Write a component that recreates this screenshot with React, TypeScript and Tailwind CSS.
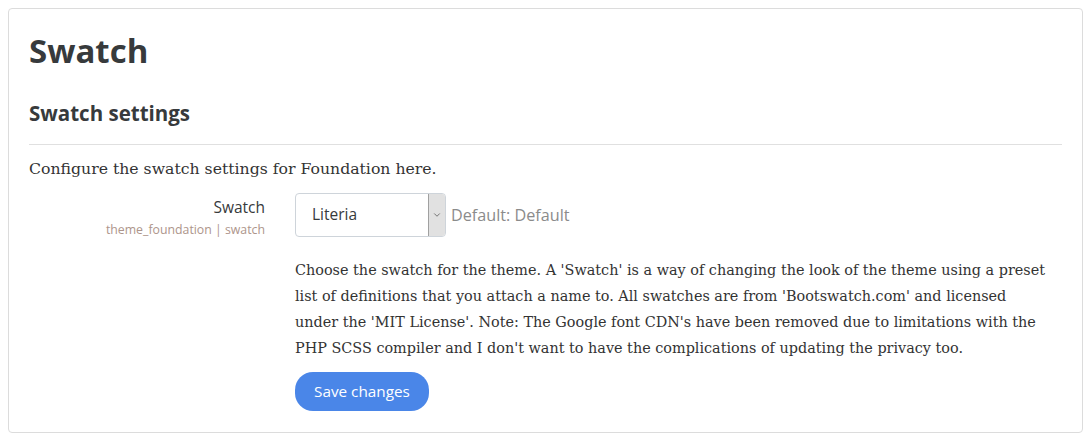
import { ChevronDown } from 'lucide-react'

const sans = "font-['Open_Sans','Noto_Sans',sans-serif]"
const serif = "font-['DejaVu_Serif',serif]"

export default function App() {
  return (
    <div className="min-h-screen bg-white p-2">
      <div className="border border-[#dcdcdc] rounded px-5 pt-[22px] pb-[21px] text-[#333]">
        <h2 className={`${sans} text-[33px] font-bold leading-[40px] text-[#373a3c]`}>Swatch</h2>
        <h3 className={`${sans} text-[20.5px] font-bold mt-[30px] leading-6 text-[#373a3c]`}>Swatch settings</h3>
        <hr className="mt-[19px] border-t border-[#e0e0e0]" />
        <p className={`${serif} text-[15.7px] mt-[12px] leading-6 text-[#333]`}>Configure the swatch settings for Foundation here.</p>

        <div className="flex mt-[12px]">
          <div className="w-[236px] shrink-0 text-right pt-[4px]">
            <div className={`${sans} text-[15.5px] leading-5 text-[#373a3c]`}>Swatch</div>
            <div className={`${sans} text-[12.3px] leading-5 mt-[3px] text-[#ad958b]`}>theme_foundation | swatch</div>
          </div>
          <div className="ml-[30px] flex-1">
            <div className="flex items-center">
              <div className="w-[151px] h-[44px] border border-[#ced4da] rounded flex">
                <div className={`${sans} flex-1 flex items-center pl-[16px] text-[15.5px] text-[#373a3c]`}>Literia</div>
                <div className="w-[17px] bg-[#e1e1e1] border-l border-[#a0a0a0] flex items-center justify-center rounded-r-[3px]">
                  <ChevronDown size={10} strokeWidth={1.5} className="text-[#333]" />
                </div>
              </div>
              <span className={`${sans} ml-[5px] text-[16.2px] text-[#8b8b8b]`}>Default: Default</span>
            </div>
            <p className={`${serif} text-[14.4px] leading-[26px] mt-[20px] text-[#333]`}>
              Choose the swatch for the theme. A 'Swatch' is a way of changing the look of the theme using a preset<br />
              list of definitions that you attach a name to. All swatches are from 'Bootswatch.com' and licensed<br />
              under the 'MIT License'. Note: The Google font CDN's have been removed due to limitations with the<br />
              PHP SCSS compiler and I don't want to have the complications of updating the privacy too.
            </p>
            <button className={`${sans} mt-[11px] h-[39px] px-[19px] rounded-[18px] bg-[#4a86e8] text-white text-[15.3px]`}>Save changes</button>
          </div>
        </div>
      </div>
    </div>
  )
}
